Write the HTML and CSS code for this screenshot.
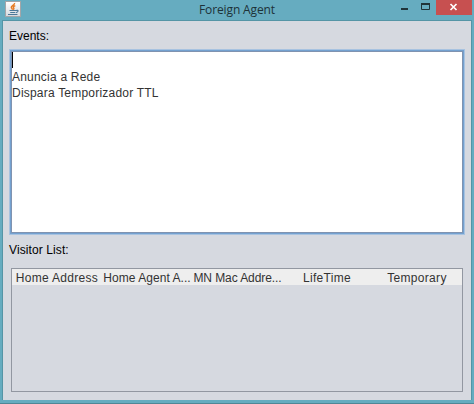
FILE: index.html
```html
<!DOCTYPE html>
<html lang="pt">
<head>
<meta charset="utf-8">
<title>Foreign Agent</title>
<link rel="stylesheet" href="styles.css">
</head>
<body>
<div class="window">
  <header class="titlebar">
    <svg class="java" width="16" height="16" viewBox="0 0 16 16">
      <defs><linearGradient id="g" x1="0" y1="0" x2="0" y2="1"><stop offset="0" stop-color="#fff"/><stop offset="1" stop-color="#d5d9df"/></linearGradient></defs>
      <rect x=".5" y=".5" width="15" height="15" fill="url(#g)" stroke="#a3a5a8"/>
      <path d="M9.600 2C10 4 6 4.500 6.300 6.300C6.400 7.300 7.500 7.700 7.400 8.800M10.300 4.600C8 5.500 8 6.200 8.800 7.200C9.100 7.900 8.600 8.300 8.200 8.800" fill="none" stroke="#e57a22" stroke-width="1.500"/>
      <path d="M4.500 9.500H11M5.200 11.500H10.300M3 13.500H12.500M11 9.500C14 8.700 13.500 11 11 11.700" fill="none" stroke="#4c7899" stroke-width="1.200"/>
    </svg>
    <h1 class="title">Foreign Agent</h1>
    <svg class="controls" width="74" height="20" viewBox="0 0 74 20">
      <rect x="3" y="8" width="7" height="2" fill="#20343a"/>
      <path d="M23.500 3.500h8v6h-8z" fill="none" stroke="#20343a"/>
      <path d="M23 4h9" stroke="#20343a" stroke-width="2"/>
      <rect x="38" y="0" width="36" height="15" fill="#c75050"/>
      <path d="M52.500 4l6 6M58.500 4l-6 6" stroke="#fff" stroke-width="1.700"/>
    </svg>
  </header>
  <main class="content">
    <div class="label"><span class="t-events">Events:</span></div>
    <div class="log">
      <div class="line"><i class="caret"></i></div>
      <div class="line">Anuncia a Rede</div>
      <div class="line">Dispara Temporizador TTL</div>
    </div>
    <div class="label label-list">Visitor List:</div>
    <div class="table">
      <div class="head">
        <span class="cell wide">Home Address</span>
        <span class="cell agent">Home Agent A...</span>
        <span class="cell mac">MN Mac Addre...</span>
        <span class="cell wide">LifeTime</span>
        <span class="cell wide">Temporary</span>
      </div>
    </div>
  </main>
</div>
</body>
</html>
```
FILE: styles.css
```css
* { box-sizing: border-box; }
body { margin: 0; overflow: hidden; font: 12px/16px "Liberation Sans", Arial, sans-serif; color: #333; }
.window { width: 474px; height: 404px; background: #66acc0; padding: 0 2px 3px; border-bottom: 1px solid #4f8796; display: flex; flex-direction: column; }
.titlebar { height: 20px; display: grid; grid-template-columns: 74px 1fr 74px; }
.java { margin: 1px 0 0 3px; }
.title { margin: 1px 0 0; font: 400 12px/18px "Open Sans", "Noto Sans", sans-serif; letter-spacing: -.12px; color: #1d3238; text-align: center; white-space: nowrap; }
.controls { display: block; }
.content { flex: 1; background: #d6d9e0; border: 1px solid #5595a6; border-bottom: 0; padding: 7px 6px 0; }
.label { height: 16px; color: #000; white-space: nowrap; }
.log { height: 186px; margin-top: 5px; border: 1px solid #a7c2e0; outline: 1px solid #73a1d0; outline-offset: -2px; padding: 2px; background: #fff; box-shadow: inset 0 0 0 2px #8093b0; white-space: nowrap; letter-spacing: .21px; }
.line { height: 16px; line-height: 18px; }
.caret { display: block; width: 1px; height: 16px; background: #000; }
.label-list { margin-top: 7px; letter-spacing: .1px; }
.table { height: 124px; margin: 10px 2px 0; border: 1px solid #9297a1; }
.head { height: 16px; background: #eee; display: grid; grid-template-columns: repeat(5, 90px); line-height: 18px; }
.cell { text-align: center; white-space: nowrap; }
.wide { letter-spacing: .3px; }
.agent { letter-spacing: .05px; }
.mac { padding-left: 1px; letter-spacing: -.08px; }
```
